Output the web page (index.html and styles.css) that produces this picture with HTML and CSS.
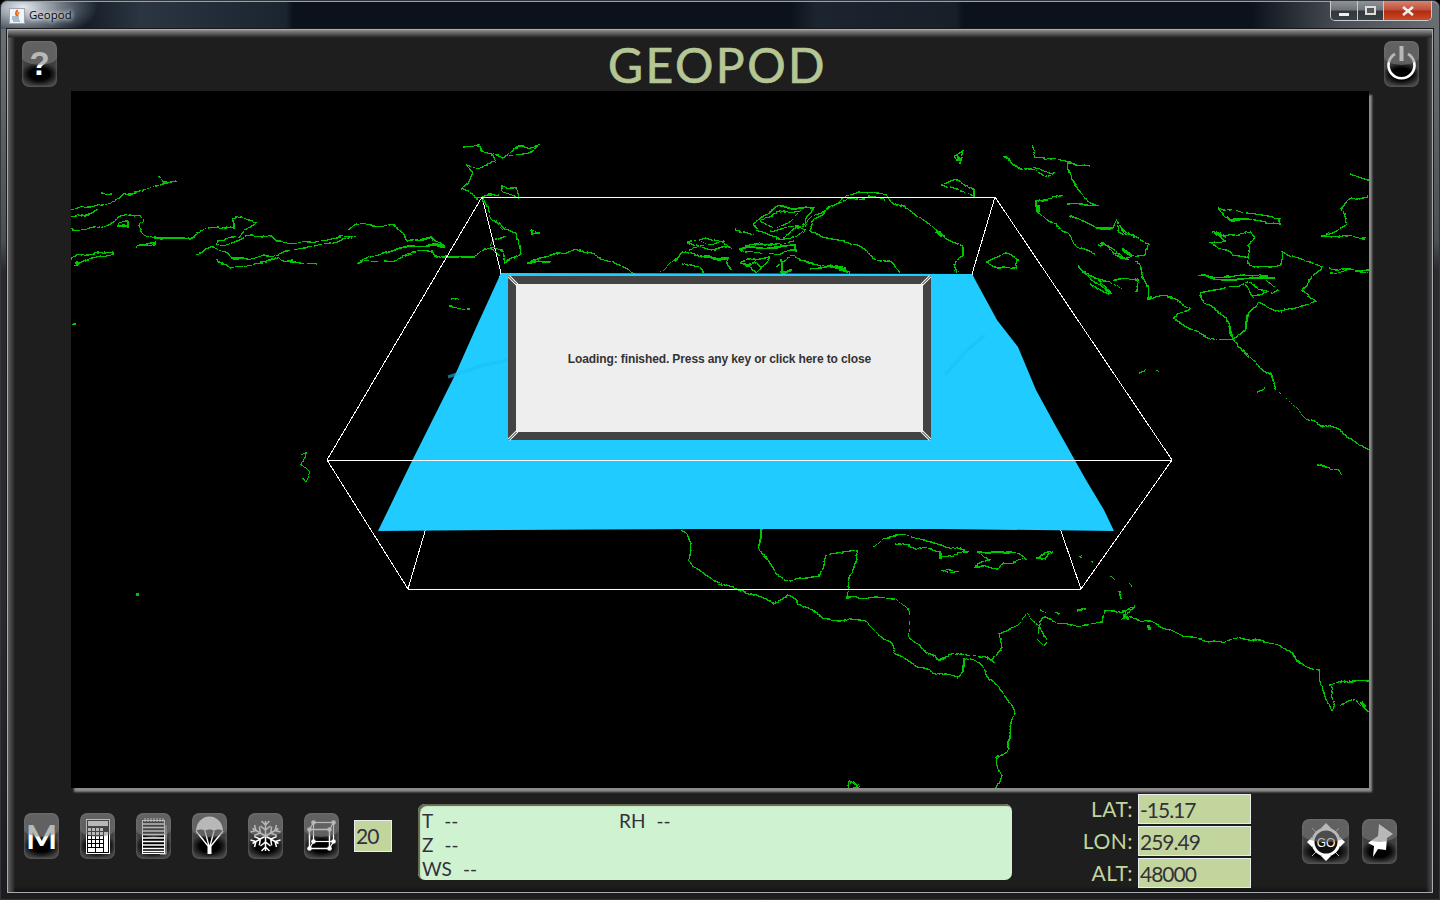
FILE: index.html
```html
<!DOCTYPE html>
<html lang="en">

<head>
    <meta charset="UTF-8">
    <title>Geopod</title>
    <link rel="stylesheet" href="styles.css">
</head>

<body>
    <div class="window">
        <div class="titlebar">
            <svg class="app-icon" width="16" height="16" viewBox="0 0 16 16">
                <rect x="0.5" y="0.5" width="15" height="15" fill="#f4f4f4" stroke="#9aa7b5" />
                <path d="M8 2 C10 4 6 5 8 8 C5 6 7 4 8 2 M10 4 C10 6 8 6 9 8" fill="none" stroke="#e8661c" stroke-width="1.2" />
                <path d="M3 9 H10 M3 11 H10 M4 13 H11" stroke="#5a86b0" stroke-width="1" />
            </svg>
            <span class="title-text">Geopod</span>
            <div class="win-controls">
                <div class="win-btn win-min"><span class="min-glyph"></span></div>
                <div class="win-btn win-max"><span class="max-glyph"></span></div>
                <div class="win-btn win-close">
                    <svg width="14" height="10" viewBox="0 0 14 10">
                        <path d="M2 1 L12 9 M12 1 L2 9" stroke="#eee" stroke-width="2.6" />
                    </svg>
                </div>
            </div>
        </div>

        <div class="frame">
            <div class="top-row">
                <div class="tool-btn">
                    <span class="btn-letter btn-help">?</span>
                </div>
                <div class="logo">GEOPOD</div>
                <div class="tool-btn">
                    <svg class="btn-icon" viewBox="0 0 35 46">
                        <path d="M11 13 A13 13 0 1 0 24 13" fill="none" stroke="#fff" stroke-width="2.6" />
                        <rect x="15.5" y="5" width="4" height="15" fill="#fff" />
                    </svg>
                </div>
            </div>

            <div class="canvas">
                <svg class="map" viewBox="71 91 1298 697" width="1298" height="697">
                    <defs>
                        <filter id="rough" filterUnits="userSpaceOnUse" x="71" y="91" width="1298" height="697" color-interpolation-filters="sRGB">
                            <feTurbulence type="fractalNoise" baseFrequency="0.07" numOctaves="1" seed="7" />
                            <feDisplacementMap in="SourceGraphic" scale="9" xChannelSelector="R" yChannelSelector="G" />
                        </filter>
                    </defs>
                    <g class="edges">
                        <polyline points="501,273 408,589" />
                        <polyline points="972,274 1081,589" />
                        <polyline points="482,197 501,273" />
                        <polyline points="995,197 972,274" />
                    </g>
                    <g class="coast" filter="url(#rough)">
                        <!-- aleutians / alaska -->
                        <polyline points="71,209 90,207 120,200 123,196 140,193 153,187 165,183 175,180" />
                        <polyline points="157,174 163,178 167,183" />
                        <polyline points="100,194 112,193" />
                        <polyline points="71,218 83,216 98,209" />
                        <polyline points="71,229 85,230 100,227 113,219 130,215 140,217 142,221 138,225 143,233 153,238 187,238 200,232 217,226 233,228 233,220 242,218 255,222 252,227 245,230 240,236 218,239 217,243 227,245 252,235 273,237 277,242 312,243 330,238 358,235" />
                        <polyline points="348,228 353,224 393,226 403,233 408,241 420,238 432,238 435,243 447,245 427,246" />
                        <polyline points="197,254 213,248 227,253 233,258 270,257 278,253 303,250 353,237" />
                        <polyline points="217,258 230,267 267,262 278,255 283,260 317,264" />
                        <polyline points="357,263 370,257 400,247 447,247" />
                        <polyline points="357,263 390,262 413,253 433,252 442,257 475,257 483,249 503,250" />
                        <polyline points="71,258 87,255 112,251 112,254 90,258 75,265" />
                        <polyline points="135,247 155,242 155,245 135,247" />
                        <polyline points="118,224 128,223 128,227 118,227 118,224" />
                        <polyline points="463,148 480,147 490,155 503,157 517,147 538,146 530,152 510,155" />
                        <polyline points="490,155 497,163 477,167 465,164 473,173 468,185 462,190 477,197 500,195" />
                        <polyline points="503,185 515,188 517,197 503,190 503,185" />
                        <polyline points="483,198 490,213 503,230 517,233 520,253 507,262 503,250" />
                        <polyline points="505,235 495,240 490,250 500,256" />
                        <polyline points="527,263 550,263" />
                        <polyline points="531,231 538,233 531,235 531,231" />
                        <polyline points="450,306 470,307" />
                        <polyline points="450,300 460,298" />
                        <polyline points="530,262 560,252 575,250 600,258 615,262 636,274" />
                        <polyline points="71,324 75,324" />
                        <polyline points="300,455 306,452 303,465 310,472 305,482 300,478" />
                        <!-- arctic canada -->
                        <polyline points="843,198 859,192 886,195 900,205 927,222 945,237 963,247 963,257 954,263 957,273" />
                        <polyline points="816,220 843,198" />
                        <polyline points="816,220 809,230 819,237 850,242 873,257 891,263 900,273" />
                        <polyline points="753,223 780,207 814,207 805,223 782,240 760,233 753,223" />
                        <polyline points="735,230 755,235" />
                        <polyline points="687,242 708,237 730,247 710,252 687,242" />
                        <polyline points="739,247 796,247 796,253 746,252 739,247" />
                        <polyline points="671,262 683,251 705,258 728,258 732,270" />
                        <polyline points="739,263 769,257 757,273 739,263" />
                        <polyline points="775,267 791,257 814,262 850,273" />
                        <polyline points="782,258 782,272 792,272" />
                        <polyline points="760,222 772,215 785,212 800,210 790,220 775,228 760,222" />
                        <polyline points="770,232 790,226 805,228 795,238 775,240" />
                        <polyline points="700,240 712,245 725,242" />
                        <polyline points="690,250 705,246" />
                        <polyline points="745,246 760,243 780,245 795,242" />
                        <polyline points="680,262 700,268 705,272" />
                        <polyline points="745,268 755,262 762,270" />
                        <polyline points="810,268 830,266 845,270" />
                        <polyline points="660,272 670,262" />
                        <polyline points="805,225 815,215 825,212" />
                        <polyline points="835,204 850,200 870,197 885,200" />
                        <polyline points="986,262 1004,254 1018,258 1016,267 1000,268 986,262" />
                        <!-- north atlantic / europe -->
                        <polyline points="954,156 964,153 960,165 954,156" />
                        <polyline points="941,185 954,178 975,190 975,195 941,185" />
                        <polyline points="1003,157 1045,177 1054,172 1022,167 1003,157" />
                        <polyline points="1031,147 1036,157 1059,160 1088,165 1068,163 1070,180 1083,197 1097,205 1068,205" />
                        <polyline points="1063,195 1036,202 1036,213 1068,233 1077,247 1097,253" />
                        <polyline points="1070,215 1095,228 1113,228 1117,220 1120,230 1147,243 1145,255 1126,258 1113,250 1099,245" />
                        <polyline points="1136,262 1145,277 1147,297 1172,298 1190,307 1172,320 1199,333 1217,340 1233,338 1246,330 1246,315 1258,302 1280,312 1317,302 1301,290 1321,267 1283,252 1280,265 1258,267 1249,263 1246,245 1256,237 1249,232 1226,237 1213,230 1226,240 1210,243 1235,255 1249,258" />
                        <polyline points="1077,267 1113,295 1099,280 1140,278 1136,293 1140,278" />
                        <polyline points="1120,225 1128,232 1135,240" />
                        <polyline points="1100,243 1115,255 1130,260" />
                        <polyline points="1080,270 1095,276 1110,280 1120,290" />
                        <polyline points="1090,282 1100,290 1112,295" />
                        <polyline points="1265,280 1280,290 1270,295" />
                        <polyline points="1216,208 1249,213 1280,218 1280,225 1249,220 1231,220 1216,208" />
                        <polyline points="1199,277 1244,274 1276,278 1226,278 1199,277" />
                        <polyline points="1199,293 1249,283 1267,293 1253,297 1246,285" />
                        <polyline points="1199,293 1203,302 1226,317 1233,338" />
                        <polyline points="1233,338 1246,357 1271,373 1276,388 1308,420 1339,430 1369,452" />
                        <polyline points="1351,175 1369,182" />
                        <polyline points="1369,197 1351,200 1342,208 1348,225 1323,235 1344,238 1366,237" />
                        <polyline points="1330,267 1369,273" />
                        <polyline points="1330,272 1369,270" />
                        <polyline points="1140,372 1145,371" />
                        <polyline points="1156,370 1160,372" />
                        <polyline points="1258,390 1266,389" />
                        <polyline points="1317,465 1339,470 1342,476" />
                        <!-- central america / south america -->
                        <polyline points="680,529 692,543 689,560 708,578 735,588 773,602 789,596 823,617 866,623 891,643 895,653 920,667 957,678 963,673 963,658 979,663 1002,692 1015,713 1009,733 1009,750 997,758 1000,777 997,787" />
                        <polyline points="760,529 760,547 778,575 791,580 819,575 825,555 855,550 857,560 850,577 848,598 873,597 895,598 907,610 909,637 936,660 961,653 986,657 997,665 993,662 1002,647 999,633 1018,625 1027,613 1034,620 1049,642 1045,647 1036,638 1038,627 1045,617 1070,625 1104,623 1106,613 1135,608 1122,617 1149,620 1185,637 1222,642 1240,637 1278,645 1305,665 1319,670 1323,692 1330,710" />
                        <polyline points="1330,710 1334,700 1330,685 1351,680 1369,680" />
                        <polyline points="873,547 882,538 905,535 941,545 968,552 941,557 941,552 895,543" />
                        <polyline points="975,552 1013,552 1025,560 1004,562 1000,568 975,567 991,560 977,554" />
                        <polyline points="941,570 959,572 950,574 941,570" />
                        <polyline points="1036,557 1054,553 1045,559 1036,557" />
                        <polyline points="848,780 854,782 858,787 850,787 848,780" />
                        <polyline points="1339,706 1355,700 1369,712" />
                        <polyline points="1070,550 1073,553" />
                        <polyline points="1080,555 1083,557" />
                        <polyline points="1090,560 1092,562" />
                        <polyline points="1110,575 1115,580" />
                        <polyline points="1118,590 1120,598" />
                        <polyline points="1125,610 1126,618" />
                        <polyline points="1130,583 1133,586" />
                        <polyline points="1040,610 1045,612" />
                        <polyline points="1055,612 1060,614" />
                        <polyline points="1075,612 1085,610" />
                    </g>
                    <g class="coast-bold">
                        <polyline points="76,262 79,265" />
                        <polyline points="165,181 166,184" />
                        <polyline points="936,231 942,236" />
                        <polyline points="1038,205 1039,212" />
                        <polyline points="1122,249 1132,256" />
                        <polyline points="1148,625 1150,630" />
                        <polyline points="1123,615 1129,619" />
                        <polyline points="957,157 961,160" />
                        <polyline points="137,593 138,596" />
                        <polyline points="1361,702 1365,707" />
                    </g>
                    <polygon class="field" points="501,273 972,274 997,320 1018,347 1036,390 1054,423 1086,480 1104,510 1114,531 940,529 700,529 500,530 378,531 410,465 455,375 475,330" />
                    <path class="streak" d="M448,377 L480,366 L508,360 M945,375 L965,352 L985,335" />
                    <g class="edges">
                        <polyline points="482,197 995,197 1172,460 1081,589 408,589 327,460 482,197" />
                        <polyline points="327,460 1172,460" />
                    </g>
                </svg>

                <div class="dialog">
                    <span class="dialog-text">Loading: finished. Press any key or click here to close</span>
                    <i class="bevel bevel-tl"></i>
                    <i class="bevel bevel-tr"></i>
                    <i class="bevel bevel-bl"></i>
                    <i class="bevel bevel-br"></i>
                </div>
            </div>

            <div class="bottom-row">
                <div class="tool-group">
                    <div class="tool-btn"><span class="btn-letter btn-m">M</span></div>
                    <div class="tool-btn">
                        <svg class="btn-icon" viewBox="0 0 35 46">
                            <rect x="6.5" y="6.5" width="23" height="34" fill="#000" stroke="#fff" />
                            <rect x="8" y="8" width="20" height="5" fill="#fff" />
                            <path d="M8 15h3v3h-3zM12 15h3v3h-3zM16 15h3v3h-3zM20 15h3v3h-3zM8 19h3v3h-3zM12 19h3v3h-3zM16 19h3v3h-3zM20 19h3v3h-3zM8 23h3v3h-3zM12 23h3v3h-3zM16 23h3v3h-3zM20 23h3v3h-3zM8 27h3v3h-3zM12 27h3v3h-3zM16 27h3v3h-3zM20 27h3v3h-3zM8 31h3v3h-3zM12 31h3v3h-3zM16 31h3v3h-3zM20 31h3v3h-3zM8 35h7v4h-7zM16 35h7v4h-7zM24 19h4v20h-4z" fill="#fff" />
                        </svg>
                    </div>
                    <div class="tool-btn">
                        <svg class="btn-icon" viewBox="0 0 35 46">
                            <rect x="6.5" y="7.5" width="22" height="33" fill="#000" stroke="#fff" />
                            <path d="M7 11H28M7 14.500H28M7 18H28M7 21.500H28M7 25H28M7 28.500H28M7 32H28M7 35.500H28M7 38.500H28" stroke="#fff" stroke-width="1.4" />
                            <path d="M9 5V9M12 5V9M15 5V9M18 5V9M21 5V9M24 5V9M27 5V9" stroke="#fff" />
                            <path d="M30 12V41H24" fill="none" stroke="#ccc" />
                        </svg>
                    </div>
                    <div class="tool-btn">
                        <svg class="btn-icon" viewBox="0 0 35 46">
                            <path d="M4 18 A13.500 14.500 0 0 1 31 18 C28 16 24 16 22 18 C20 16 15 16 13 18 C11 16 7 16 4 18Z" fill="#fff" />
                            <path d="M4 18 L16 33 M13 18 L17 33 M22 18 L18 33 M31 18 L19 33" stroke="#fff" stroke-width="1.3" fill="none" />
                            <rect x="15.500" y="32" width="4" height="9" fill="#fff" />
                        </svg>
                    </div>
                    <div class="tool-btn">
                        <svg class="btn-icon" viewBox="0 0 35 46">
                            <defs>
                                <g id="arm">
                                    <path d="M0 0V-15 M-4 -15L0 -11L4 -15 M-5 -10L0 -6L5 -10" fill="none" stroke="#fff" stroke-width="1.5" />
                                </g>
                            </defs>
                            <g transform="translate(17.500 23)">
                                <use href="#arm" />
                                <use href="#arm" transform="rotate(60)" />
                                <use href="#arm" transform="rotate(120)" />
                                <use href="#arm" transform="rotate(180)" />
                                <use href="#arm" transform="rotate(240)" />
                                <use href="#arm" transform="rotate(300)" />
                            </g>
                        </svg>
                    </div>
                    <div class="tool-btn">
                        <svg class="btn-icon" viewBox="0 0 35 46">
                            <rect x="9.500" y="9.500" width="20" height="19" fill="none" stroke="#fff" stroke-width="1.2" />
                            <rect x="5.500" y="16.500" width="20" height="19" fill="none" stroke="#fff" stroke-width="1.5" />
                            <path d="M9.500 9.500L5.500 16.500M29.500 9.500L25.500 16.500M29.500 28.500L25.500 35.500M9.500 28.500L5.500 35.500" stroke="#fff" stroke-width="1.2" />
                            <g fill="#fff">
                                <circle cx="9.500" cy="9.500" r="2.300" />
                                <circle cx="29.500" cy="9.500" r="2.300" />
                                <circle cx="29.500" cy="28.500" r="2.300" />
                                <circle cx="9.500" cy="28.500" r="2.300" />
                                <circle cx="5.500" cy="16.500" r="2.300" />
                                <circle cx="25.500" cy="16.500" r="2.300" />
                                <circle cx="25.500" cy="35.500" r="2.300" />
                                <circle cx="5.500" cy="35.500" r="2.300" />
                            </g>
                        </svg>
                    </div>
                    <div class="num-box">20</div>
                </div>

                <div class="readout">
                    <div class="readout-cell">T<span class="dash">--</span></div>
                    <div class="readout-cell">RH<span class="dash">--</span></div>
                    <div class="readout-cell">Z<span class="dash">--</span></div>
                    <div class="readout-cell"></div>
                    <div class="readout-cell">WS<span class="dash">--</span></div>
                </div>

                <div class="coords">
                    <div class="coord-row"><span class="coord-label">LAT:</span><div class="coord-field">-15.17</div></div>
                    <div class="coord-row"><span class="coord-label">LON:</span><div class="coord-field">259.49</div></div>
                    <div class="coord-row"><span class="coord-label">ALT:</span><div class="coord-field">48000</div></div>
                </div>

                <div class="nav-btns">
                    <div class="tool-btn go-btn">
                        <svg class="btn-icon" viewBox="0 0 47 45">
                            <path d="M10 9L37 37M37 9L10 37" stroke="#bbb" stroke-width="1" />
                            <circle cx="24" cy="23" r="13" fill="#111" stroke="#fff" stroke-width="3" />
                            <path d="M24 4L29 9H19ZM24 42L19 37H29ZM5 23L10 18V28ZM43 23L38 28V18Z" fill="#fff" />
                            <text class="go-text" x="24" y="27.500">GO</text>
                        </svg>
                    </div>
                    <div class="tool-btn">
                        <svg class="btn-icon" viewBox="0 0 35 45">
                            <path d="M17 5L31 15L25 19L24 31L16 30L11 38L12 27L6 24L16 17Z" fill="#fff" />
                        </svg>
                    </div>
                </div>
            </div>
        </div>
    </div>
</body>

</html>
```

FILE: styles.css
```css
* {
    box-sizing: border-box;
}

html,
body {
    margin: 0;
    padding: 0;
}

body {
    width: 1440px;
    height: 900px;
    overflow: hidden;
    background: #000;
    font-family: "Lato", "Liberation Sans", sans-serif;
}

.window {
    display: flex;
    flex-direction: column;
    width: 1440px;
    height: 900px;
    padding: 0 6px 6px 6px;
    border: 1px solid #30363c;
    border-radius: 7px 7px 0 0;
    background: linear-gradient(to bottom, #6f7478 0, #4b4e52 240px, #2a2a2c 270px, #2b2b2d 600px, #1d1d1f 900px);
}

/* title bar */
.titlebar {
    display: flex;
    align-items: flex-start;
    flex: none;
    height: 28px;
    margin: 0 -6px;
    padding-left: 8px;
    border-radius: 7px 7px 0 0;
    background:
        radial-gradient(ellipse 75px 34px at 22px 6px, rgba(240, 244, 250, .95), rgba(190, 205, 220, .4) 65%, transparent),
        linear-gradient(to right, transparent 60px, rgba(110, 130, 150, .32) 140px, rgba(90, 110, 130, .2) 285px, transparent 292px),
        linear-gradient(to right, transparent 790px, rgba(70, 85, 100, .28) 815px, rgba(50, 60, 72, .3) 955px, transparent 962px),
        linear-gradient(to right, #0b121b 0, #0b121b 1250px, #4a4f55 1340px, #6b6f74 1440px);
    box-shadow: inset 0 1px 0 #9aa0a6;
}

.app-icon {
    margin: 7px 4px 0 0;
}

.title-text {
    margin-top: 6px;
    color: #07090c;
    font: 11.500px/16px "Open Sans", "Liberation Sans", sans-serif;
    text-shadow: 0 0 5px #fff, 0 0 5px #fff;
}

.win-controls {
    display: flex;
    margin-left: auto;
    margin-right: 7px;
    height: 20px;
    border: 1px solid #c8ccd0;
    border-top: 0;
    border-radius: 0 0 5px 5px;
    overflow: hidden;
}

.win-btn {
    display: flex;
    align-items: center;
    justify-content: center;
    height: 100%;
    border-right: 1px solid #c8ccd0;
}

.win-min,
.win-max {
    width: 27px;
    background: linear-gradient(to bottom, #8f949a 0, #70757b 45%, #33383e 55%, #3b4046 100%);
}

.win-max {
    width: 26px;
}

.win-close {
    width: 47px;
    border-right: 0;
    background: linear-gradient(to bottom, #d98470 0, #c0503a 45%, #b02d12 55%, #cc4a28 100%);
}

.min-glyph {
    display: block;
    width: 10px;
    height: 3px;
    margin-top: 7px;
    background: #eee;
}

.max-glyph {
    display: block;
    width: 11px;
    height: 9px;
    border: 2px solid #ddd;
    background: #555;
}

/* main frame */
.frame {
    display: flex;
    flex-direction: column;
    flex: 1;
    min-height: 0;
    border: 1px solid #a8acb0;
    outline: 1px solid #1a1a1a;
    background:
        linear-gradient(to bottom, #8d8d8d 0, #555 4px, #2a2a2a 7px, transparent 8px),
        linear-gradient(to right, #5e5e5e 0, #333 5px, transparent 7px),
        linear-gradient(to left, #4a4a4a 0, transparent 6px),
        linear-gradient(to top, #111 0, transparent 6px),
        #1e1e1e;
}

.top-row {
    display: flex;
    align-items: flex-start;
    justify-content: space-between;
    flex: none;
    height: 61px;
    padding: 11px 13px 0 14px;
}

.logo {
    margin-top: -1px;
    margin-right: 6px;
    color: #b5c694;
    font: 400 48px/50px "Lato", sans-serif;
    letter-spacing: 2.500px;
    -webkit-text-stroke: .7px #b5c694;
}

/* buttons with the gloss on top */
.tool-btn {
    position: relative;
    flex: none;
    width: 35px;
    height: 46px;
    display: flex;
    align-items: center;
    justify-content: center;
    border-radius: 7px;
    background:
        radial-gradient(ellipse 55% 26% at 50% 72%, #000 50%, transparent 100%),
        #3f3f3f;
    box-shadow: inset 0 0 3px #777;
    overflow: hidden;
}

.tool-btn::after {
    content: "";
    position: absolute;
    top: 0;
    left: 0;
    right: 0;
    height: 52%;
    border-radius: 7px 7px 50% 50% / 7px 7px 35% 35%;
    background: rgba(125, 125, 125, .55);
}

.btn-icon {
    width: 100%;
    height: 100%;
    display: block;
}

.btn-letter {
    color: #fff;
    line-height: 46px;
}

.btn-help {
    font: 700 33px/46px "Liberation Sans", sans-serif;
}

.btn-m {
    font: 700 33px/46px "Lato", sans-serif;
}

/* 3d view */
.canvas {
    position: relative;
    flex: none;
    width: 1298px;
    height: 697px;
    margin-left: 63px;
    background: #000;
    box-shadow: 3px 4px 2px #8c8c8c;
}

.map {
    display: block;
}

.map polyline,
.map path {
    fill: none;
}

.edges polyline {
    stroke: #fff;
    stroke-width: 1;
    shape-rendering: crispEdges;
}

.field {
    fill: #1fcbff;
    stroke: none;
}

.streak {
    stroke: #1cc0f2;
    stroke-width: 3;
    opacity: .6;
}

.coast polyline {
    stroke: #00c800;
    stroke-width: 1.300;
    shape-rendering: crispEdges;
}

.coast-bold polyline {
    stroke: #00c800;
    stroke-width: 3;
    shape-rendering: crispEdges;
}

.dialog {
    position: absolute;
    left: 437px;
    top: 185px;
    width: 423px;
    height: 164px;
    display: flex;
    align-items: center;
    justify-content: center;
    border: 8px solid #434343;
    background: #eee;
}

.dialog-text {
    color: #333;
    font: 700 12px/16px "Liberation Sans", sans-serif;
    letter-spacing: -.11px;
    margin-top: 2px;
}

.bevel {
    position: absolute;
    width: 12px;
    height: 3px;
    border-top: 1px solid #fff;
    border-bottom: 1px solid #fff;
}

.bevel-tl {
    left: -9px;
    top: -5px;
    transform: rotate(45deg);
}

.bevel-tr {
    right: -9px;
    top: -5px;
    transform: rotate(-45deg);
}

.bevel-bl {
    left: -9px;
    bottom: -5px;
    transform: rotate(-45deg);
}

.bevel-br {
    right: -9px;
    bottom: -5px;
    transform: rotate(45deg);
}

/* bottom panel */
.bottom-row {
    display: flex;
    align-items: flex-start;
    flex: 1;
    padding-left: 16px;
}

.tool-group {
    display: flex;
    align-items: center;
    gap: 21px;
    width: 394px;
    margin-top: 25px;
}

.num-box {
    width: 38px;
    height: 32px;
    margin-left: -6px;
    padding-left: 1px;
    border: 1px solid #e8eef0;
    background: #c1d59c;
    color: #35303a;
    font: 400 21px/30px "Lato", sans-serif;
    letter-spacing: -1px;
}

.readout {
    display: grid;
    grid-template-columns: 197px 1fr;
    grid-auto-rows: 24px;
    align-content: start;
    width: 594px;
    height: 76px;
    margin-top: 16px;
    padding: 5px 0 0 4px;
    border-radius: 7px;
    background: #cff3d0;
    box-shadow: inset 2px 2px 1px #65684f;
    color: #35303a;
    font: 400 19px/24px "Lato", sans-serif;
}

.dash {
    margin-left: 11px;
}

.coords {
    display: flex;
    flex-direction: column;
    gap: 2px;
    width: 239px;
    margin-top: 6px;
    padding-right: 0;
}

.coord-row {
    display: flex;
    justify-content: flex-end;
    align-items: center;
    gap: 5px;
}

.coord-label {
    color: #c1d59c;
    font: 400 21px/30px "Lato", sans-serif;
    letter-spacing: .5px;
}

.coord-field {
    width: 113px;
    height: 30px;
    padding-left: 1px;
    border: 1px solid #e8eef0;
    background: #c1d59c;
    color: #35303a;
    font: 400 21px/29px "Lato", sans-serif;
    letter-spacing: -1px;
}

.nav-btns {
    display: flex;
    gap: 13px;
    margin-top: 31px;
    margin-left: 51px;
}

.go-btn {
    width: 47px;
    height: 45px;
}

.nav-btns .tool-btn {
    height: 45px;
}

.go-text {
    fill: #fff;
    font: 400 12px "Liberation Sans", sans-serif;
    text-anchor: middle;
}
```
